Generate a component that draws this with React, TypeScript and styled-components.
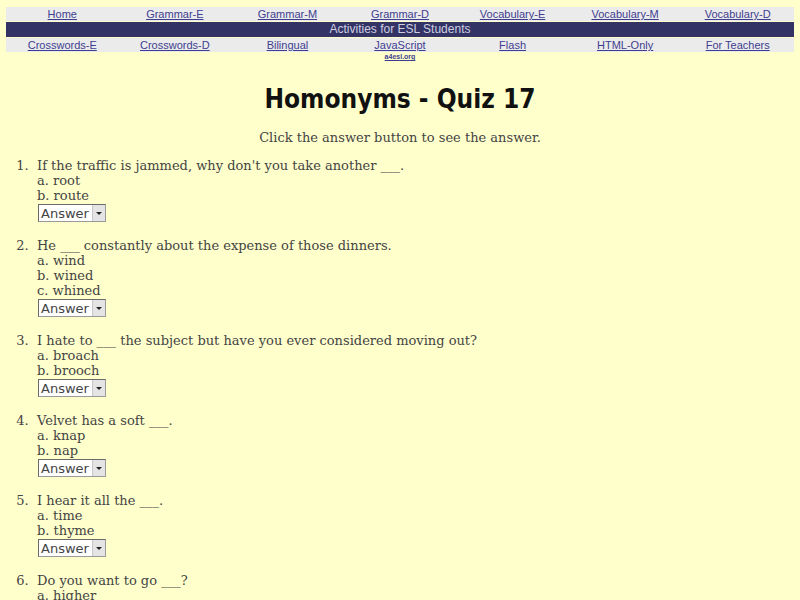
import React from "react";
import styled, { createGlobalStyle } from "styled-components";

const Global = createGlobalStyle`
  html, body { margin: 0; padding: 0; }
  body {
    background: #ffffcc;
    color: #444444;
    font-family: "DejaVu Serif", "Liberation Serif", serif;
    font-size: 13px;
  }
`;

const Page = styled.div`
  padding: 7px 6px 0 6px;
`;

const Nav = styled.div`
  display: flex;
  flex-direction: column;
  gap: 1px;
`;

const NavRow = styled.div`
  display: grid;
  grid-template-columns: repeat(7, 1fr);
  background: #ebebeb;
  height: 14px;
  align-items: center;
`;

const NavCell = styled.div`
  display: flex;
  flex-direction: column;
  align-items: center;
  position: relative;
`;

const NavLink = styled.a`
  font-family: "Liberation Sans", Arial, sans-serif;
  font-size: 11px;
  line-height: 14px;
  color: #3e3e90;
  text-decoration: underline;
`;

const SubLink = styled.a`
  position: absolute;
  top: 14px;
  font-family: "Liberation Sans", Arial, sans-serif;
  font-size: 7px;
  font-weight: bold;
  line-height: 9px;
  color: #3e3e90;
  text-decoration: underline;
`;

const Band = styled.div`
  background: #333366;
  color: #cfcfe0;
  height: 15px;
  line-height: 15px;
  text-align: center;
  font-family: "Liberation Sans", Arial, sans-serif;
  font-size: 12px;
`;

const Title = styled.h1`
  margin: 30px 0 0 0;
  text-align: center;
  font-family: "DejaVu Sans", "Liberation Sans", sans-serif;
  font-stretch: condensed;
  font-weight: bold;
  font-size: 26px;
  line-height: 34px;
  color: #111111;
`;

const Intro = styled.p`
  margin: 14px 0 0 0;
  text-align: center;
  line-height: 15px;
`;

const List = styled.ol`
  margin: 13px 0 0 0;
  padding-left: 31px;
  line-height: 15px;
`;

const Item = styled.li`
  margin-bottom: 15px;
  &::marker {
    content: counter(list-item) ".\\00a0\\00a0";
  }
`;

const Choice = styled.div``;

const SelectLine = styled.div`
  height: 20px;
  display: flex;
  align-items: center;
  padding-left: 1px;
`;

const FakeSelect = styled.div`
  display: flex;
  align-items: center;
  height: 16px;
  border: 1px solid #9a9a9a;
  border-top-color: #6a6a6a;
  border-left-color: #6a6a6a;
  background: #ffffff;
  padding-left: 2px;
  font-family: "DejaVu Sans", "Liberation Sans", sans-serif;
  font-size: 13px;
  color: #444444;
`;

const Arrow = styled.span`
  margin-left: 3px;
  width: 12px;
  height: 16px;
  background: #e4e4e4;
  border-left: 1px solid #c8c8c8;
  display: flex;
  align-items: center;
  justify-content: center;
  &::after {
    content: "";
    border-left: 3px solid transparent;
    border-right: 3px solid transparent;
    border-top: 3px solid #222;
  }
`;

const top = ["Home", "Grammar-E", "Grammar-M", "Grammar-D", "Vocabulary-E", "Vocabulary-M", "Vocabulary-D"];
const bottom = ["Crosswords-E", "Crosswords-D", "Bilingual", "JavaScript", "Flash", "HTML-Only", "For Teachers"];

const questions: { q: string; opts: string[] }[] = [
  { q: "If the traffic is jammed, why don't you take another ___.", opts: ["root", "route"] },
  { q: "He ___ constantly about the expense of those dinners.", opts: ["wind", "wined", "whined"] },
  { q: "I hate to ___ the subject but have you ever considered moving out?", opts: ["broach", "brooch"] },
  { q: "Velvet has a soft ___.", opts: ["knap", "nap"] },
  { q: "I hear it all the ___.", opts: ["time", "thyme"] },
  { q: "Do you want to go ___?", opts: ["higher", "hire"] },
];

const letters = "abcdefg";

export default function App() {
  return (
    <Page>
      <Global />
      <Nav>
        <NavRow>
          {top.map((t) => (
            <NavCell key={t}>
              <NavLink href="#">{t}</NavLink>
            </NavCell>
          ))}
        </NavRow>
        <Band>Activities for ESL Students</Band>
        <NavRow>
          {bottom.map((t) => (
            <NavCell key={t}>
              <NavLink href="#">{t}</NavLink>
              {t === "JavaScript" && <SubLink href="#">a4esl.org</SubLink>}
            </NavCell>
          ))}
        </NavRow>
      </Nav>
      <Title>Homonyms - Quiz 17</Title>
      <Intro>Click the answer button to see the answer.</Intro>
      <List>
        {questions.map((item) => (
          <Item key={item.q}>
            {item.q}
            {item.opts.map((o, i) => (
              <Choice key={o}>
                {letters[i]}. {o}
              </Choice>
            ))}
            <SelectLine>
              <FakeSelect>
                Answer
                <Arrow />
              </FakeSelect>
            </SelectLine>
          </Item>
        ))}
      </List>
    </Page>
  );
}
